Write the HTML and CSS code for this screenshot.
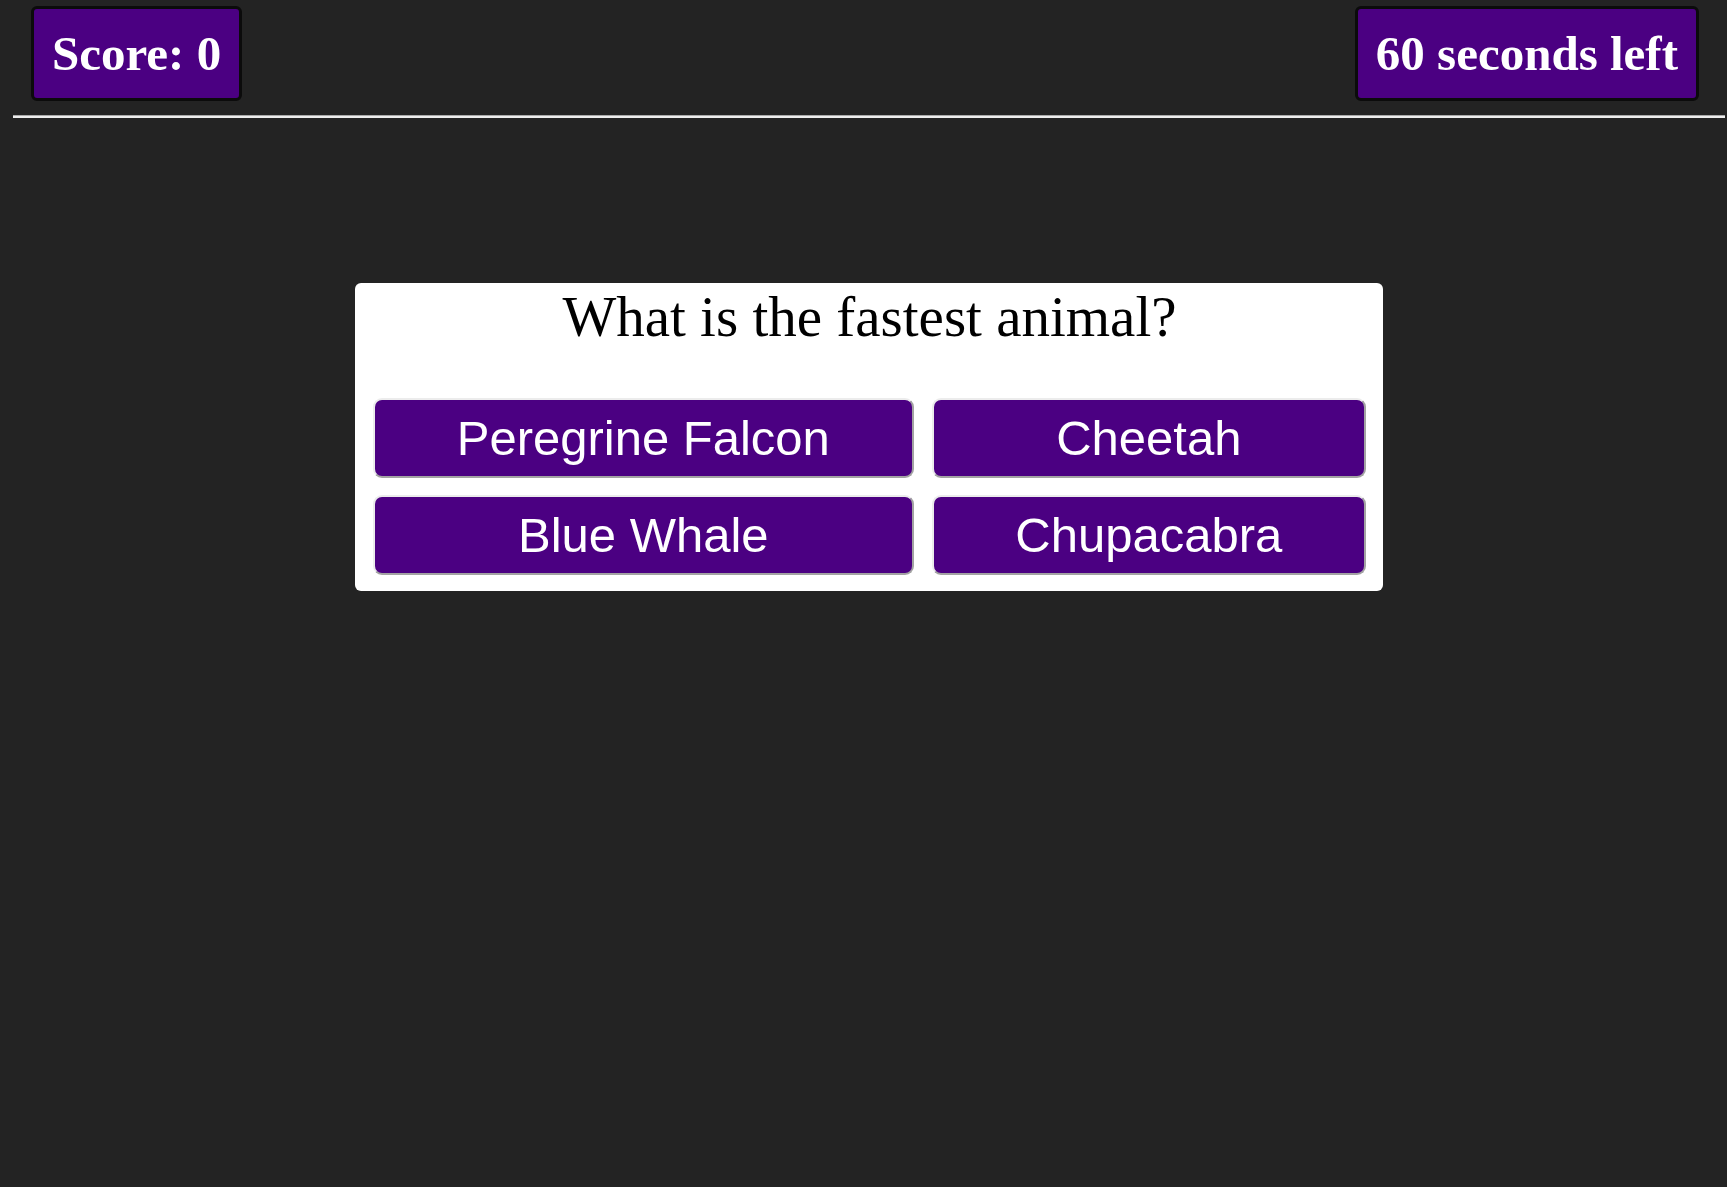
FILE: index.html
```html
<!DOCTYPE html>
<html lang="en">
<head>
<meta charset="utf-8">
<title>Quiz</title>
<link rel="stylesheet" href="styles.css">
</head>
<body>
  <header class="topbar">
    <div class="badge">Score: 0</div>
    <div class="badge">60 seconds left</div>
  </header>
  <div class="rule"></div>
  <main class="stage">
    <section class="card">
      <h2 class="question">What is the fastest animal?</h2>
      <div class="answers">
        <button class="answer">Peregrine Falcon</button>
        <button class="answer">Cheetah</button>
        <button class="answer">Blue Whale</button>
        <button class="answer">Chupacabra</button>
      </div>
    </section>
  </main>
</body>
</html>
```

FILE: styles.css
```css
html, body {
  margin: 0;
  padding: 0;
}

body {
  background: #232323;
  min-height: 1187px;
  font-family: "Liberation Serif", "Times New Roman", serif;
}

.topbar {
  display: flex;
  justify-content: space-between;
  align-items: flex-start;
  padding: 6px 28px 0 31px;
}

.badge {
  background: #4b0082;
  color: #ffffff;
  border: 3px solid #0b0b0b;
  border-radius: 6px;
  padding: 16px 18px;
  font-family: "Liberation Serif", "Times New Roman", serif;
  font-weight: bold;
  font-size: 49px;
  line-height: 57px;
  white-space: nowrap;
}

.rule {
  margin: 14px 2px 0 13px;
  height: 3px;
  box-sizing: border-box;
  border-top: 1px solid #a9a9a9;
  background: #ededed;
}

.stage {
  padding: 165px 0 0 11px;
}

.card {
  width: 1028px;
  box-sizing: border-box;
  margin: 0 auto;
  background: #ffffff;
  border-radius: 6px;
  padding: 1px 17px 16px 18px;
}

.question {
  margin: 0 0 49px;
  font-family: "Liberation Serif", "Times New Roman", serif;
  font-weight: normal;
  font-size: 57px;
  line-height: normal;
  color: #000000;
  text-align: center;
}

.answers {
  display: grid;
  grid-template-columns: auto auto;
  column-gap: 18px;
  row-gap: 17px;
}

.answer {
  background: #4b0082;
  color: #ffffff;
  border: 2px solid;
  border-color: #ececec #a3a3a3 #a3a3a3 #ececec;
  border-radius: 9px;
  padding: 10px 0;
  font-family: "Liberation Sans", Arial, sans-serif;
  font-size: 49px;
  line-height: normal;
  white-space: nowrap;
  cursor: pointer;
}
```
